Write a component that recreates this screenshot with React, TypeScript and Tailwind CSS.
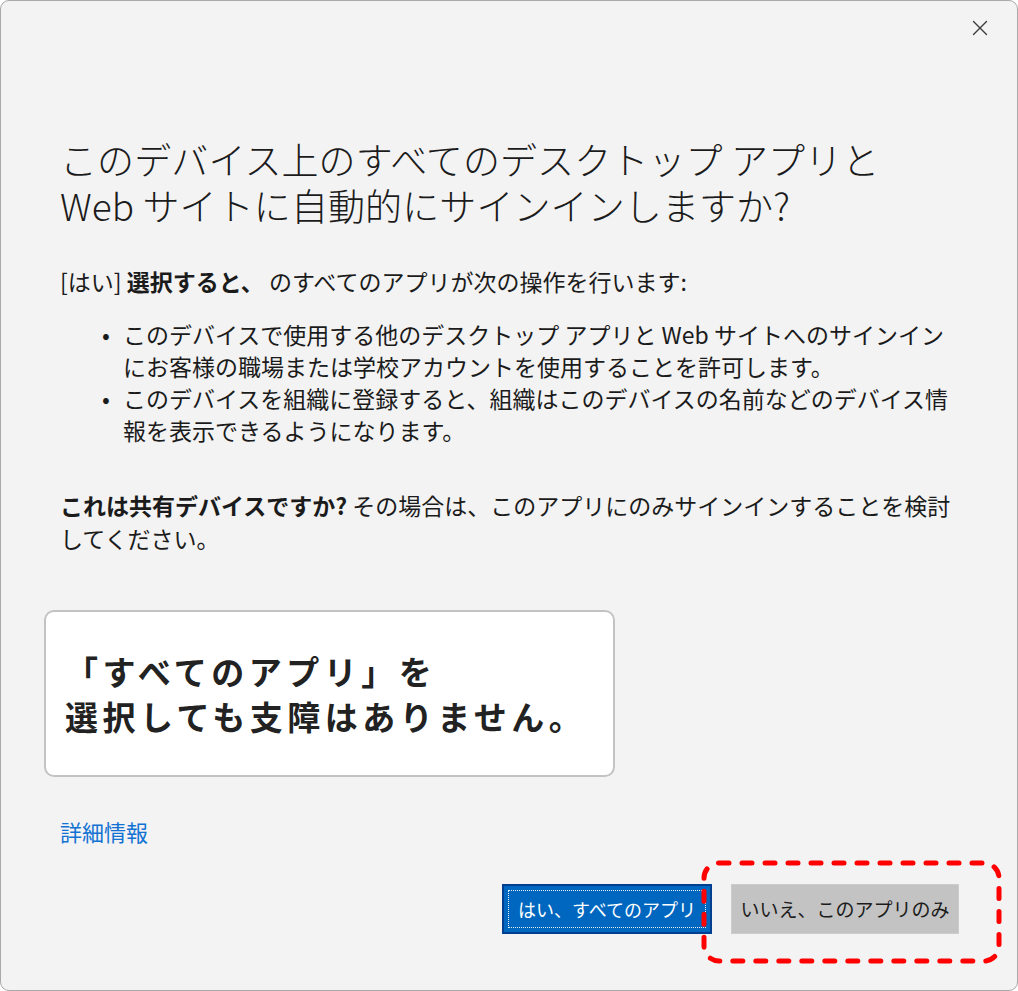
import React from "react";

const jp = { fontFamily: '"Noto Sans CJK JP", "Noto Sans", sans-serif' };

export default function App() {
  return (
    <div className="w-[1018px] h-[991px] bg-white" style={jp}>
      <div className="relative w-[1018px] h-[991px] rounded-[9px] border border-[#a9a9a9] bg-[#f3f3f3] text-[#1b1b1b] overflow-hidden">
        {/* close button */}
        <div className="absolute right-[28px] top-[18px] w-[18px] h-[18px] flex items-center justify-center">
          <svg width="16" height="16" viewBox="0 0 16 16">
            <path d="M1.5 1.5 L14.5 14.5 M14.5 1.5 L1.5 14.5" stroke="#3b3b3b" strokeWidth="1.4" strokeLinecap="round" />
          </svg>
        </div>

        <div className="flex flex-col pl-[59px] pr-[40px] pt-[135px]">
          <h1 className="flex flex-col text-[37px] font-light whitespace-nowrap tracking-[0.1px]">
            <span className="block h-[46px] leading-[46px]">このデバイス上のすべてのデスクトップ アプリと</span>
            <span className="block h-[46px] leading-[46px]">Web サイトに自動的にサインインしますか?</span>
          </h1>

          <p className="mt-[37px] text-[23px] leading-[32px] whitespace-nowrap">
            [はい] <span className="font-bold">選択すると、</span> のすべてのアプリが次の操作を行います:
          </p>

          <ul className="mt-[21px] text-[23px] leading-[32px] whitespace-nowrap flex flex-col">
            <li className="flex">
              <span className="w-[63px] pl-[42px] shrink-0">•</span>
              <span>
                このデバイスで使用する他のデスクトップ アプリと Web サイトへのサインイン
                <br />
                にお客様の職場または学校アカウントを使用することを許可します。
              </span>
            </li>
            <li className="flex">
              <span className="w-[63px] pl-[42px] shrink-0">•</span>
              <span>
                このデバイスを組織に登録すると、組織はこのデバイスの名前などのデバイス情
                <br />
                報を表示できるようになります。
              </span>
            </li>
          </ul>

          <p className="mt-[43px] text-[23px] leading-[33px] whitespace-nowrap">
            <span className="font-bold">これは共有デバイスですか?</span> その場合は、このアプリにのみサインインすることを検討
            <br />
            してください。
          </p>

          <div className="mt-[55px] -ml-[16px] w-[571px] h-[167px] rounded-[10px] border-2 border-[#c3c3c3] bg-white flex flex-col justify-center pl-[19px]">
            <p className="text-[33px] leading-[45px] font-bold tracking-[4.5px] text-[#222222] whitespace-nowrap">
              「すべてのアプリ」を
              <br />
              選択しても支障はありません。
            </p>
          </div>

          <a className="mt-[39px] text-[22px] leading-[30px] text-[#1272d3] w-fit">詳細情報</a>
        </div>

        <div className="absolute left-0 right-[58px] top-[883px] flex justify-end gap-[19px]">
          <button className="relative w-[210px] h-[50px] bg-[#0067c0] border-2 border-[#003f8f] text-white text-[18px] flex items-center justify-center whitespace-nowrap">
            <span className="absolute inset-[4px] border border-dotted border-white/90" />
            <span className="relative">はい、すべてのアプリ</span>
          </button>
          <button className="w-[228px] h-[50px] bg-[#c3c3c3] border border-[#cccccc] text-[#1b1b1b] text-[19px] flex items-center justify-center whitespace-nowrap">
            いいえ、このアプリのみ
          </button>
        </div>

        {/* red dashed annotation */}
        <svg className="absolute left-[700px] top-[859px]" width="301" height="104" viewBox="0 0 301 104">
          <rect x="3" y="3" width="295" height="98" rx="15" ry="15" fill="none" stroke="#ff0000" strokeWidth="5" strokeDasharray="10 13" strokeLinecap="round" />
        </svg>
      </div>
    </div>
  );
}
